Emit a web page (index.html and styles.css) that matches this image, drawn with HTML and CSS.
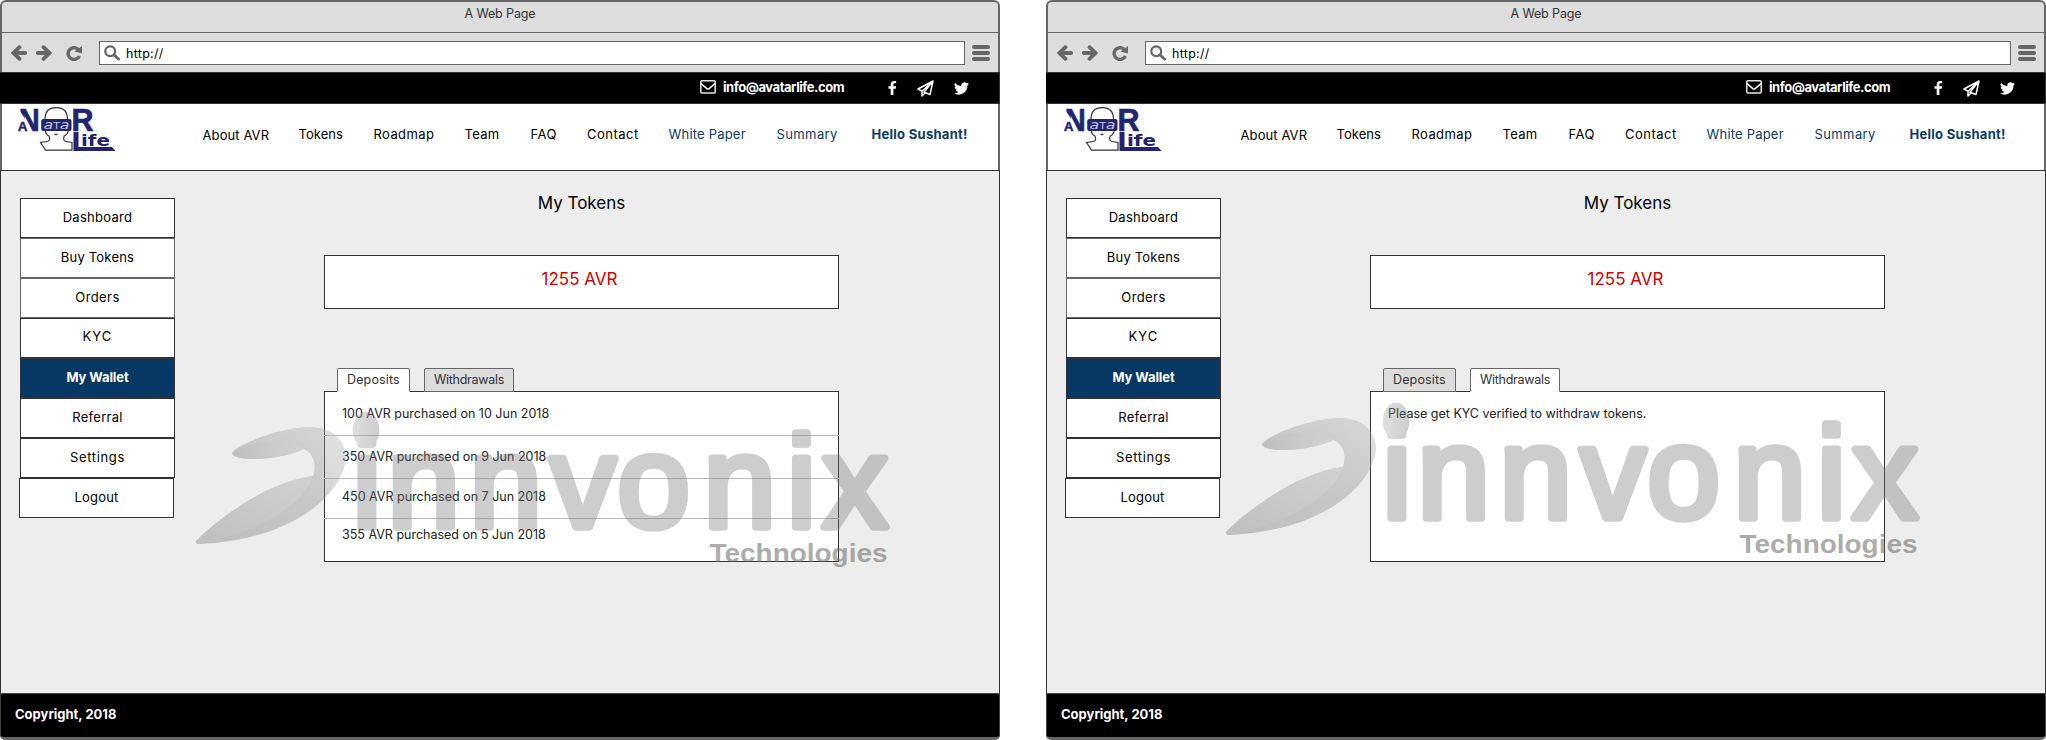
FILE: index.html
```html
<!DOCTYPE html>
<html lang="en">
<head>
<meta charset="utf-8">
<title>My Tokens</title>
<link rel="stylesheet" href="styles.css">
</head>
<body>

<svg class="defs" width="0" height="0" aria-hidden="true">
  <defs>
    <linearGradient id="arc" x1="0" y1="1" x2="1" y2="0"><stop offset="0" stop-color="#6c6c6c"/><stop offset=".55" stop-color="#858585"/><stop offset="1" stop-color="#b4b4b4"/></linearGradient>
    <linearGradient id="blade" x1="0" y1="1" x2="1" y2="0"><stop offset="0" stop-color="#707070"/><stop offset="1" stop-color="#a2a2a2"/></linearGradient>
    <linearGradient id="flap" x1="0" y1="0" x2="1" y2="0"><stop offset="0" stop-color="#707070"/><stop offset="1" stop-color="#a6a6a6"/></linearGradient>
    <linearGradient id="dot" x1="0" y1="0" x2="1" y2="0"><stop offset="0" stop-color="#a8a8a8"/><stop offset="1" stop-color="#747474"/></linearGradient>

    <symbol id="back" viewBox="0 0 16 16"><path d="M8.5 2.200 2.500 8l6 5.800M3 8h11.200" fill="none" stroke="#666" stroke-width="3.800" stroke-linecap="round"/><path d="M.5 8 6 3.500v9z" fill="#666"/></symbol>
    <symbol id="reload" viewBox="0 0 16 16"><path d="M12 4.200A5.900 5.900 0 1 0 13.400 11" fill="none" stroke="#666" stroke-width="3.400"/><path d="M16 1v7.500L8.500 6.500z" fill="#666"/></symbol>
    <symbol id="search" viewBox="0 0 16 16"><circle cx="6.2" cy="6.2" r="4.9" fill="none" stroke="#666" stroke-width="2.3"/><path d="m10 10 4.5 4" stroke="#666" stroke-width="3" stroke-linecap="round"/></symbol>
    <symbol id="mail" viewBox="0 0 16 14"><rect x=".8" y=".8" width="14.4" height="12.2" rx="1" fill="none" stroke="#e6e6e6" stroke-width="1.5"/><path d="M1 3.5 6.8 8.6q1.2.9 2.4 0L15 3.5" fill="none" stroke="#fff" stroke-width="1.5"/></symbol>
    <symbol id="facebook" viewBox="0 0 10 16"><path d="M9 .3v2.500H7.400C6.300 2.800 6 3.400 6 4.200V6h3l-.4 2.900H6V15.700H3V8.900H.5V6H3V3.900C3 1.500 4.500.1 6.700.1z" fill="#fff"/></symbol>
    <symbol id="plane" viewBox="0 0 17 17"><path d="M16 1 1 9l4 2.200L16 1 7 12.200l6 2.300zM5 11.200V16l3-3.300" fill="none" stroke="#fff" stroke-width="1.500" stroke-linejoin="round"/></symbol>
    <symbol id="twitter" viewBox="0 0 24 20"><path d="M24 2.400a9.800 9.800 0 0 1-2.800.8A4.900 4.900 0 0 0 23.300.5a9.900 9.900 0 0 1-3.100 1.200A4.900 4.900 0 0 0 11.800 6.200 14 14 0 0 1 1.700 1a4.900 4.900 0 0 0 1.500 6.600A4.900 4.900 0 0 1 1 7v.1a4.900 4.900 0 0 0 3.900 4.800 4.900 4.900 0 0 1-2.200.1 4.900 4.900 0 0 0 4.600 3.400A9.900 9.900 0 0 1 0 17.500 14 14 0 0 0 21.500 5z" fill="#fff"/></symbol>

    <symbol id="brand" viewBox="0 0 98 46">
      <path d="M27.500 25.500q0 4 3.500 5.500 2 5-2 5.500l-6.500 1 5 7.700h26.500v-7.700l-6-1q-3.500-.5-1.800-5.500 3.500-1.500 4-5.500" fill="#fff" stroke="#333" stroke-width="1.200"/>
      <path d="M27 14.500C27 6.500 31 2.700 38.200 2.700S49.500 6.500 49.500 14.500" fill="#fff" stroke="#333" stroke-width="1.200"/>
      <path d="M35.500 28.800h5l-2.500 1.700z" fill="#333"/>
      <text x=".8" y="25.500" textLength="21" lengthAdjust="spacingAndGlyphs" class="brand-big">N</text>
      <path d="M0 3 7.500 14.500V26.500H0z" fill="#fff"/>
      <text x="-.3" y="25.800" class="brand-small">A</text>
      <rect x="23.200" y="14" width="30.300" height="12" rx="2" fill="#23236f"/>
      <text x="25.500" y="23.800" textLength="26" lengthAdjust="spacingAndGlyphs" class="brand-visor">a<tspan class="brand-visor-mid">T</tspan>a</text>
      <text x="53.500" y="25.500" textLength="22" lengthAdjust="spacingAndGlyphs" class="brand-big">R</text>
      <path d="M55.500 27h5v15H94l3.500 4h-42z" fill="#23236f"/>
      <text x="63" y="40.700" textLength="29" lengthAdjust="spacingAndGlyphs" class="brand-life">ife</text>
    </symbol>

    <symbol id="mark" viewBox="0 0 1000 740">
      <g opacity=".36">
        <path d="M232 453C236 445 280 427 310 427C334 427 346 442 346 458C344 480 326 500 308 512C275 535 235 542 200 544C196 544 195 542 196 541C215 522 265 482 313 476C317 463 313 454 304 449C285 457 260 461 240 458C236 457 232 455 232 453Z" fill="url(#arc)"/>
        <path d="M196 541C215 522 265 482 313 476C300 510 255 532 200 543.500Q196 544 196 541Z" fill="url(#blade)"/>
        <path d="M232 453C238 447 250 443 262 443C280 442 295 444 304 449C285 457 260 461 240 458C236 457 232 455 232 453Z" fill="url(#flap)"/>
        <text class="mark-name" y="526.500" x="352.500 387.500 469.500 550.500 617.500 703.500 787 822.500">innvonix</text>
        <ellipse cx="366" cy="430" rx="13.300" ry="18.200" fill="url(#dot)"/>
      </g>
      <text class="mark-sub" x="709.500" y="561.500" textLength="178" lengthAdjust="spacingAndGlyphs">Technologies</text>
    </symbol>
  </defs>
</svg>

<main class="board">
  <section class="window">
    <div class="chrome">
      <div class="titlebar">A Web Page</div>
      <div class="toolbar">
        <svg class="tool"><use href="#back"/></svg>
        <svg class="tool forward"><use href="#back"/></svg>
        <svg class="tool reload"><use href="#reload"/></svg>
        <div class="url"><svg class="tool"><use href="#search"/></svg><span>http://</span></div>
        <div class="menu"><i></i><i></i><i></i></div>
      </div>
    </div>
    <div class="topbar">
      <svg class="mail"><use href="#mail"/></svg>
      <span class="email">info@avatarlife.com</span>
      <svg class="facebook"><use href="#facebook"/></svg>
      <svg class="plane"><use href="#plane"/></svg>
      <svg class="twitter"><use href="#twitter"/></svg>
    </div>
    <header class="header">
      <svg class="brand"><use href="#brand"/></svg>
      <nav class="nav">
        <a class="about">About AVR</a><a class="s1">Tokens</a><a class="s4">Roadmap</a><a class="s3">Team</a><a class="s5">FAQ</a><a class="s5">Contact</a><a class="link s2">White Paper</a><a class="link s4">Summary</a><a class="link strong s3">Hello Sushant!</a>
      </nav>
    </header>
    <div class="page">
      <ul class="side">
        <li class="s3">Dashboard</li><li class="gray s2">Buy Tokens</li><li class="gray s4">Orders</li><li class="kyc">KYC</li><li class="active">My Wallet</li><li class="s3">Referral</li><li class="s6">Settings</li><li class="logout s2">Logout</li>
      </ul>
      <div class="content">
        <h1>My Tokens</h1>
        <div class="balance">1255 AVR</div>
        <div class="tabs"><span class="tab deposits on">Deposits</span><span class="tab withdrawals">Withdrawals</span></div>
        <div class="panel">
          <p class="r1">100 AVR purchased on 10 Jun 2018</p>
          <p class="r2">350 AVR purchased on 9 Jun 2018</p>
          <p class="r3">450 AVR purchased on 7 Jun 2018</p>
          <p class="r4">355 AVR purchased on 5 Jun 2018</p>
        </div>
      </div>
    </div>
    <footer class="footer">Copyright, 2018</footer>
    <svg class="watermark"><use href="#mark"/></svg>
  </section>

  <section class="window">
    <div class="chrome">
      <div class="titlebar">A Web Page</div>
      <div class="toolbar">
        <svg class="tool"><use href="#back"/></svg>
        <svg class="tool forward"><use href="#back"/></svg>
        <svg class="tool reload"><use href="#reload"/></svg>
        <div class="url"><svg class="tool"><use href="#search"/></svg><span>http://</span></div>
        <div class="menu"><i></i><i></i><i></i></div>
      </div>
    </div>
    <div class="topbar">
      <svg class="mail"><use href="#mail"/></svg>
      <span class="email">info@avatarlife.com</span>
      <svg class="facebook"><use href="#facebook"/></svg>
      <svg class="plane"><use href="#plane"/></svg>
      <svg class="twitter"><use href="#twitter"/></svg>
    </div>
    <header class="header">
      <svg class="brand"><use href="#brand"/></svg>
      <nav class="nav nav-near">
        <a class="about">About AVR</a><a class="s1">Tokens</a><a class="s4">Roadmap</a><a class="s3">Team</a><a class="s5">FAQ</a><a class="s5">Contact</a><a class="link s2">White Paper</a><a class="link s4">Summary</a><a class="link strong s3">Hello Sushant!</a>
      </nav>
    </header>
    <div class="page">
      <ul class="side">
        <li class="s3">Dashboard</li><li class="gray s2">Buy Tokens</li><li class="gray s4">Orders</li><li class="kyc">KYC</li><li class="active">My Wallet</li><li class="s3">Referral</li><li class="s6">Settings</li><li class="logout s2">Logout</li>
      </ul>
      <div class="content">
        <h1>My Tokens</h1>
        <div class="balance">1255 AVR</div>
        <div class="tabs"><span class="tab deposits">Deposits</span><span class="tab withdrawals on">Withdrawals</span></div>
        <div class="panel"><p>Please get KYC verified to withdraw tokens.</p></div>
      </div>
    </div>
    <footer class="footer">Copyright, 2018</footer>
    <svg class="watermark watermark-raised"><use href="#mark"/></svg>
  </section>
</main>
</body>
</html>
```
FILE: styles.css
```css
* { box-sizing: border-box; }
body { margin: 0; background: #fff; font: 13px/16px Inter, "Liberation Sans", sans-serif; color: #000; }
svg { display: block; flex: none; }
.defs { position: absolute; }
.board { display: flex; gap: 46px; }
.window { position: relative; width: 1000px; height: 740px; display: flex; flex-direction: column; }

/* browser chrome */
.chrome { height: 72px; background: #ddd; border: 2px solid #666; border-bottom: 0; border-radius: 6px 6px 0 0; }
.titlebar { height: 31px; padding-top: 4px; border-bottom: 1px solid #666; text-align: center; font-size: 12.5px; letter-spacing: -.13px; color: #333; }
.toolbar { height: 39px; padding: 8px 7px 0 9px; display: flex; align-items: flex-start; }
.tool { width: 16px; height: 16px; margin-top: 3.500px; }
.forward { margin-left: 9px; transform: scaleX(-1); }
.reload { margin-left: 14px; }
.url { width: 866px; height: 24px; margin-left: 17px; padding-left: 4px; display: flex; gap: 6px; background: #fff; border: 1px solid #666; font-size: 12.5px; letter-spacing: .3px; }
.url .tool { margin-top: 3px; }
.url span { padding-top: 4px; }
.menu { width: 18px; margin: 4px 0 0 7px; display: flex; flex-direction: column; gap: 2px; }
.menu i { height: 4px; border-radius: 2px; background: #666; }

/* contact strip */
.topbar { height: 32px; padding: 1px 0 0 700px; display: flex; align-items: flex-start; background: #000; border: solid #333; border-width: 1px 1px 1px 0; color: #fff; }
.mail { width: 16px; height: 14px; margin-top: 6px; }
.email { width: 121px; margin: 5px 0 0 7px; font-weight: 700; letter-spacing: -.45px; white-space: nowrap; }
.facebook { width: 9px; height: 16px; margin: 6px 0 0 44px; }
.plane { width: 17px; height: 17px; margin: 6px 0 0 20px; }
.twitter { width: 15px; height: 13px; margin: 8px 0 0 20px; }

/* site header */
.header { height: 66px; display: flex; background: #fff; border: solid #666; border-width: 0 2px; }
.brand { width: 98px; height: 46px; margin: 1px 0 0 16px; overflow: visible; }
.brand-big { font: 700 32px "Liberation Sans", sans-serif; fill: #23236f; stroke: #23236f; stroke-width: .7px; }
.brand-small { font: 700 13.500px "Liberation Sans", sans-serif; fill: #23236f; stroke: #23236f; stroke-width: .4px; }
.brand-visor { font: italic 13px "DejaVu Sans", sans-serif; fill: #c8c8dd; }
.brand-visor-mid { font-size: 9px; font-style: normal; }
.brand-life { font: 700 15.500px "DejaVu Sans", sans-serif; fill: #23236f; }
.nav { padding: 22px 0 0 86.500px; display: grid; grid-template-columns: 96px 75px 91px 66px 56.500px 81.500px 108px 95px auto; white-space: nowrap; }
.nav-near { padding-left: 78.500px; }
.about { padding-top: 1px; letter-spacing: .1px; }
.link { color: #0b3a66; }
.strong { font-weight: 700; }
.s1 { letter-spacing: .06px; }
.s2 { letter-spacing: .2px; }
.s3 { letter-spacing: .28px; }
.s4 { letter-spacing: .4px; }
.s5 { letter-spacing: .48px; }
.s6 { letter-spacing: .65px; }

/* page body */
.page { height: 523px; display: flex; background: #ededed; border: 1px solid #333; border-bottom: 0; }
.side { width: 156px; margin: 27px 0 0 18px; padding: 0; list-style: none; }
.side li { width: 155px; height: 40px; margin-left: 1px; padding-top: 10px; background: #fff; border: 1px solid #333; text-align: center; }
.side .gray { border-color: #666; }
.side .kyc { padding-top: 9px; letter-spacing: 1.100px; }
.side .active { background: #073763; color: #fff; font-weight: 700; letter-spacing: -.1px; }
.side .logout { margin-left: 0; }
.content { width: 515px; margin-left: 149px; }
h1 { margin: 22px 0 0; height: 62px; text-align: center; font-size: 17px; line-height: 20px; font-weight: 400; }
.balance { height: 54px; padding: 13px 4px 0 0; background: #fff; border: 1px solid #333; text-align: center; font-size: 17px; line-height: 20px; color: #c00; }
.tabs { height: 82px; padding: 59px 0 0 13px; display: flex; gap: 14px; }
.tab { height: 24px; padding: 3px 0 0 9px; background: #ddd; border: 1px solid #666; border-radius: 2px 2px 0 0; font-size: 12.5px; color: #333; position: relative; z-index: 1; }
.tab.on { background: #fff; border-bottom-color: #fff; }
.deposits { width: 73px; letter-spacing: .15px; }
.withdrawals { width: 90px; letter-spacing: -.28px; }
.panel { height: 171px; background: #fff; border: 1px solid #333; font-size: 12.5px; color: #222; }
.panel p { margin: 0 -1px; padding: 14px 0 0 18px; white-space: nowrap; }
.panel .r1 { height: 44px; border-bottom: 1px solid #bbb; }
.panel .r2 { height: 43px; padding-top: 13px; border-bottom: 1px solid #bbb; }
.panel .r3 { height: 40px; padding-top: 10px; border-bottom: 1px solid #bbb; }
.panel .r4 { padding-top: 8px; }

.footer { height: 47px; padding: 12px 0 0 14px; background: #000; border: 1px solid #444; border-bottom: 3px solid #666; border-radius: 0 0 5px 5px; color: #fff; font-weight: 700; }

/* agency watermark over the page */
.watermark { position: absolute; left: 0; top: 0; width: 1000px; height: 740px; pointer-events: none; z-index: 2; }
.watermark-raised { left: -16px; top: -9px; }
.mark-name { font: 130px "Liberation Sans", sans-serif; fill: #787878; stroke: #787878; stroke-width: 7.500px; stroke-linejoin: round; }
.mark-sub { font: 700 26px "Liberation Sans", sans-serif; fill: #646464; opacity: .53; }
```
